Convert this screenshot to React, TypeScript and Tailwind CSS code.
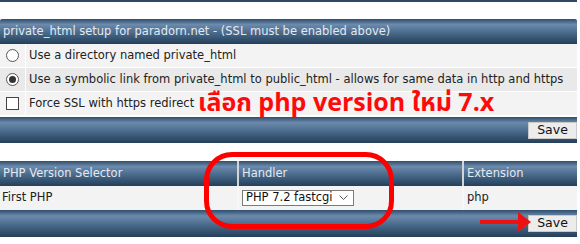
const BAR = 'bg-[linear-gradient(to_bottom,#2f4d6c_0%,#6c8aab_22%,#4f6f91_50%,#33526f_80%,#263f5a_100%)]';

function SaveButton() {
    return (
        <button className="w-[49px] h-[17px] bg-[#ececec] border border-[#c9c9c9] text-[12.5px] leading-none text-[#111] font-['DejaVu_Sans',sans-serif]">
            Save
        </button>
    );
}

function OptionRow({ icon, label, shade }: { icon: React.ReactNode; label: string; shade: string }) {
    return (
        <div className={`flex h-[23px] ${shade}`}>
            <div className="w-[26px] flex items-center justify-center border-r border-white">{icon}</div>
            <div className="flex items-center pl-[3px] text-[11.5px] text-[#222]">{label}</div>
        </div>
    );
}

export default function App() {
    return (
        <div className="relative w-[580px] h-[244px] bg-white overflow-hidden font-['DejaVu_Sans',Verdana,sans-serif]">
            <div className="w-[577px] h-[2px] bg-[#2c4866]" />

            <div className="w-[577px] mt-[17px]">
                <div className={`h-[25px] flex items-center pl-[3px] text-[11.5px] text-[#e3eaf2] rounded-t-[2px] ${BAR}`}>
                    private_html setup for paradorn.net - (SSL must be enabled above)
                </div>
                <div className="flex flex-col gap-px">
                    <OptionRow
                        shade="bg-[#f3f3f3]"
                        label="Use a directory named private_html"
                        icon={<span className="block w-[13px] h-[13px] rounded-full border border-[#555] bg-white" />}
                    />
                    <OptionRow
                        shade="bg-[#e9e9e9]"
                        label="Use a symbolic link from private_html to public_html - allows for same data in http and https"
                        icon={
                            <span className="flex items-center justify-center w-[13px] h-[13px] rounded-full border border-[#555] bg-white">
                                <span className="block w-[7px] h-[7px] rounded-full bg-[#333]" />
                            </span>
                        }
                    />
                    <OptionRow
                        shade="bg-[#f3f3f3]"
                        label="Force SSL with https redirect"
                        icon={<span className="block w-[13px] h-[13px] border border-[#444] bg-white" />}
                    />
                </div>
                <div className={`mt-[2px] h-[26px] flex items-center justify-end ${BAR}`}>
                    <SaveButton />
                </div>
            </div>

            <div className="w-[577px] mt-[18px]">
                <div className="grid grid-cols-[237px_223px_1fr] gap-[2px] bg-[#d4d4d4]">
                    <div className={`h-[25px] flex items-center pl-[3px] text-[11.5px] text-[#e3eaf2] ${BAR}`}>PHP Version Selector</div>
                    <div className={`h-[25px] flex items-center pl-[3px] text-[11.5px] text-[#e3eaf2] ${BAR}`}>Handler</div>
                    <div className={`h-[25px] flex items-center pl-[3px] text-[11.5px] text-[#e3eaf2] ${BAR}`}>Extension</div>
                </div>
                <div className="grid grid-cols-[237px_223px_1fr] gap-[2px] bg-[#f7f7f7] h-[24px] text-[11.5px] text-[#222]">
                    <div className="bg-[#f3f3f3] flex items-center pl-[2px]">First PHP</div>
                    <div className="bg-[#f3f3f3] flex items-center pl-[3px]">
                        <div className="w-[112px] h-[16px] bg-white border border-[#7a7a7a] flex items-center justify-between pl-[3px] pr-[5px] text-[11.5px] text-[#111]">
                            <span>PHP 7.2 fastcgi</span>
                            <svg width="9" height="6" viewBox="0 0 9 6"><path d="M0.5 0.5 L4.5 4.5 L8.5 0.5" fill="none" stroke="#555" strokeWidth="1" /></svg>
                        </div>
                    </div>
                    <div className="bg-[#f3f3f3] flex items-center pl-[3px]">php</div>
                </div>
                <div className={`h-[27px] flex items-center justify-end ${BAR}`}>
                    <SaveButton />
                </div>
            </div>

            <div className="absolute left-[198px] top-[94px] text-[25px] font-bold leading-[18px] text-[#ff0a0a] font-['Noto_Sans_Thai','Noto_Sans_Thai_Looped','Loma','Garuda',sans-serif] whitespace-nowrap">
                เลือก php version ใหม่ 7.x
            </div>

            <div className="absolute left-[204px] top-[152px] w-[190px] h-[77px] rounded-[28px] border-[5px] border-[#ff0000]" />

            <svg className="absolute left-[480px] top-[211px]" width="52" height="22" viewBox="0 0 52 22">
                <rect x="0" y="9" width="40" height="4" fill="#ee1111" />
                <polygon points="38,1 51,11 38,21" fill="#ee1111" />
            </svg>
        </div>
    );
}
